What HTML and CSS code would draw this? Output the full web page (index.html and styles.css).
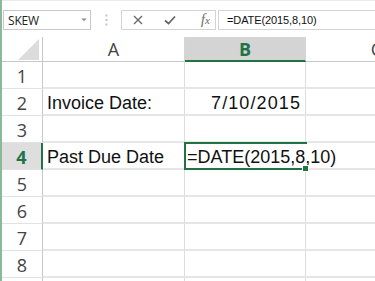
FILE: index.html
```html
<!DOCTYPE html>
<html>
<head>
<meta charset="utf-8">
<link rel="stylesheet" href="styles.css">
</head>
<body>
<div class="window">
  <div class="formula-bar">
    <div class="namebox">
      <span class="name">SKEW</span>
      <svg class="dd" width="6" height="4" viewBox="0 0 6 4"><path d="M0.5 0.5 L3 3.3 L5.5 0.5 Z" fill="#8a8a8a"/></svg>
    </div>
    <div class="grip">
      <svg width="3" height="12" viewBox="0 0 3 12"><rect x="0.5" y="0.5" width="2" height="2" fill="#c4c4c4"/><rect x="0.5" y="5" width="2" height="2" fill="#c4c4c4"/><rect x="0.5" y="9.5" width="2" height="2" fill="#c4c4c4"/></svg>
    </div>
    <div class="fx-buttons">
      <svg class="btn-x" width="10" height="10" viewBox="0 0 10 10"><path d="M1 1 L9 9 M9 1 L1 9" stroke="#666" stroke-width="1.3" fill="none"/></svg>
      <svg class="btn-check" width="12" height="10" viewBox="0 0 12 10"><path d="M1 5.5 L4.5 8.5 L11 1.5" stroke="#666" stroke-width="1.8" fill="none"/></svg>
      <span class="fx">f<span class="fx-x">x</span></span>
    </div>
    <div class="formula-input">=DATE(2015,8,10)</div>
  </div>

  <div class="sheet">
    <div class="corner">
      <svg width="41" height="25" viewBox="0 0 41 25"><polygon points="39,2 39,23 18,23" fill="#dcdcdc"/></svg>
    </div>
    <div class="colhead">A</div>
    <div class="colhead active">B</div>
    <div class="colhead">C</div>

    <div class="rowhead">1</div><div class="cell"></div><div class="cell"></div><div class="cell"></div>
    <div class="rowhead">2</div><div class="cell">Invoice Date:</div><div class="cell num">7/10/2015</div><div class="cell"></div>
    <div class="rowhead">3</div><div class="cell"></div><div class="cell"></div><div class="cell"></div>
    <div class="rowhead active">4</div><div class="cell">Past Due Date</div><div class="cell selected"><span class="edit">=DATE(2015,8,10)</span><span class="caret"></span><span class="handle"></span></div><div class="cell"></div>
    <div class="rowhead">5</div><div class="cell"></div><div class="cell"></div><div class="cell"></div>
    <div class="rowhead">6</div><div class="cell"></div><div class="cell"></div><div class="cell"></div>
    <div class="rowhead">7</div><div class="cell"></div><div class="cell"></div><div class="cell"></div>
    <div class="rowhead">8</div><div class="cell"></div><div class="cell"></div><div class="cell"></div>
    <div class="rowhead">9</div><div class="cell"></div><div class="cell"></div><div class="cell"></div>
  </div>
</div>
</body>
</html>
```

FILE: styles.css
```css
html, body {
  margin: 0;
  padding: 0;
  background: #ffffff;
}

.window {
  width: 375px;
  height: 281px;
  overflow: hidden;
  box-sizing: border-box;
  border-left: 2px solid #8db79a;
  background: #ffffff;
}

.formula-bar {
  height: 37px;
  box-sizing: border-box;
  padding-top: 10px;
  display: flex;
  align-items: flex-start;
  border-top: 1px solid #ececec;
}

.namebox {
  margin-left: 1px;
  width: 88px;
  height: 20px;
  box-sizing: border-box;
  border: 1px solid #c8c8c8;
  display: flex;
  align-items: center;
  justify-content: space-between;
  padding: 0 3px 0 4px;
  margin-top: -1px;
}

.name {
  font-family: "Open Sans", "Liberation Sans", sans-serif;
  font-size: 12px;
  color: #222;
  letter-spacing: -0.2px;
}

.dd {
  display: block;
}

.grip {
  width: 30px;
  height: 20px;
  display: flex;
  align-items: center;
  justify-content: center;
  margin-top: -1px;
}

.grip svg {
  display: block;
}

.fx-buttons {
  width: 95px;
  height: 20px;
  box-sizing: border-box;
  border: 1px solid #d4d4d4;
  display: flex;
  align-items: center;
  margin-top: -1px;
}

.btn-x {
  margin-left: 11px;
}

.btn-check {
  margin-left: 21px;
}

.fx {
  margin-left: 25px;
  font-family: "Liberation Serif", serif;
  font-style: italic;
  font-size: 14px;
  color: #666;
}

.fx-x {
  font-size: 11px;
}

.formula-input {
  margin-left: 2px;
  flex: 1;
  height: 20px;
  box-sizing: border-box;
  border: 1px solid #d4d4d4;
  border-right: none;
  padding-left: 8px;
  font-family: "Liberation Sans", Arial, sans-serif;
  font-size: 11px;
  letter-spacing: -0.1px;
  line-height: 18px;
  color: #111;
  white-space: nowrap;
  margin-top: -1px;
}

.sheet {
  display: grid;
  grid-template-columns: 41px 142px 121px 142px;
  grid-template-rows: 25px repeat(9, 27px);
  width: 446px;
}

.corner {
  border-right: 1px solid #c8c8c8;
  border-bottom: 1px solid #c8c8c8;
  box-sizing: border-box;
  margin-left: -2px;
}

.corner svg {
  display: block;
}

.colhead {
  box-sizing: border-box;
  border-right: 1px solid #d6d6d6;
  border-bottom: 1px solid #c8c8c8;
  display: flex;
  align-items: center;
  justify-content: center;
  font-family: "Open Sans", "Liberation Sans", sans-serif;
  font-size: 18px;
  color: #444;
}

.colhead.active {
  background: #d4d4d4;
  color: #217346;
  font-weight: 700;
  border-bottom: 2px solid #217346;
}

.rowhead {
  box-sizing: border-box;
  border-right: 1px solid #c8c8c8;
  border-bottom: 1px solid #e2e2e2;
  display: flex;
  align-items: center;
  justify-content: center;
  font-family: "Open Sans", "Liberation Sans", sans-serif;
  font-size: 18px;
  color: #444;
  margin-left: -2px;
  padding-left: 2px;
  padding-top: 2px;
}

.rowhead.active {
  background: #dedede;
  color: #217346;
  font-weight: 700;
  border-right: 2px solid #217346;
}

.cell {
  box-sizing: border-box;
  border-right: 1px solid #dedede;
  border-bottom: 2px solid #e6e6e6;
  display: flex;
  align-items: center;
  padding-left: 4px;
  padding-top: 3px;
  font-family: "Liberation Sans", Arial, sans-serif;
  font-size: 18px;
  color: #111;
  white-space: nowrap;
}

.cell.num {
  justify-content: flex-end;
  padding-right: 4px;
  letter-spacing: 1.1px;
}

.cell.selected {
  position: relative;
  padding-left: 2px;
  border-right: none;
  overflow: visible;
  z-index: 2;
}

.cell.selected::after {
  content: "";
  position: absolute;
  left: -1px;
  top: -1px;
  right: -1px;
  bottom: -2px;
  border: 2px solid #217346;
  border-right: none;
}

.caret {
  display: inline-block;
  width: 1px;
  height: 20px;
  background: #111;
  margin-left: 2px;
}

.handle {
  position: absolute;
  right: -3px;
  bottom: -4px;
  width: 5px;
  height: 5px;
  background: #217346;
  border: 1px solid #fff;
  z-index: 3;
}
```
